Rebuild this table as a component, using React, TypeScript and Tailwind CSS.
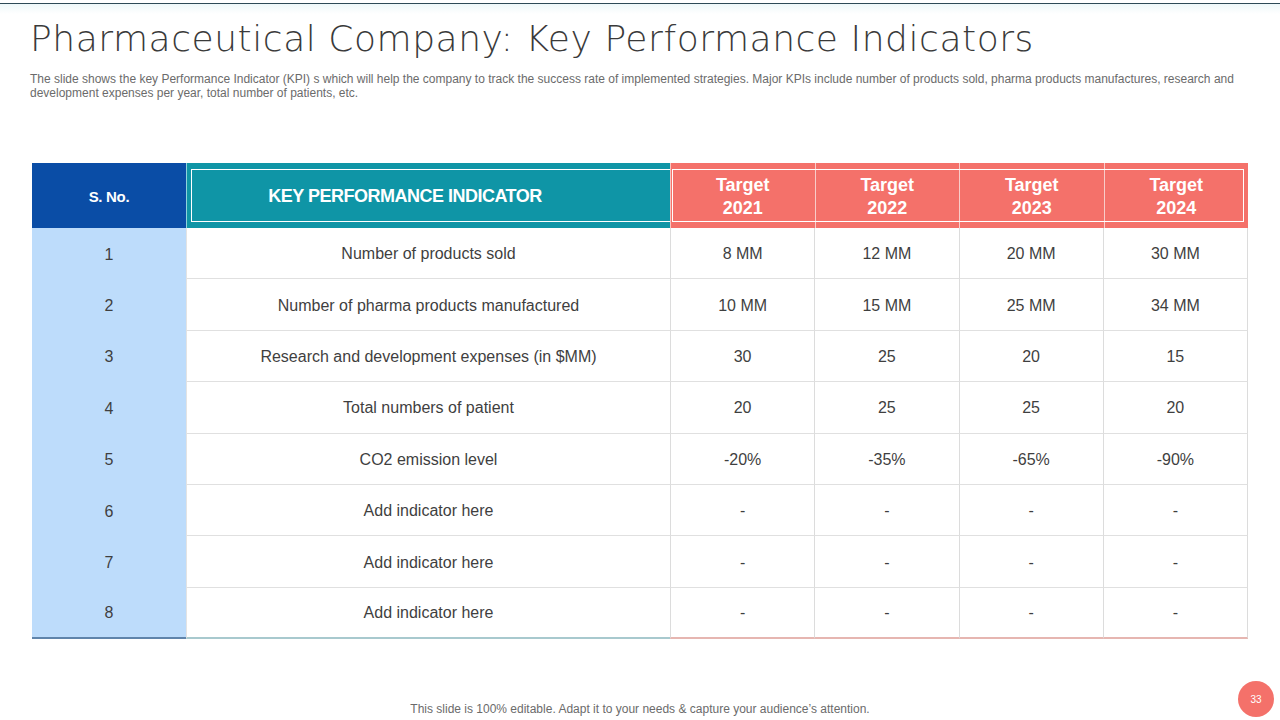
import React from "react";

const rows: [string, string, string, string, string, string][] = [
  ["1", "Number of products sold", "8 MM", "12 MM", "20 MM", "30 MM"],
  ["2", "Number of pharma products manufactured", "10 MM", "15 MM", "25 MM", "34 MM"],
  ["3", "Research and development expenses (in $MM)", "30", "25", "20", "15"],
  ["4", "Total numbers of patient", "20", "25", "25", "20"],
  ["5", "CO2 emission level", "-20%", "-35%", "-65%", "-90%"],
  ["6", "Add indicator here", "-", "-", "-", "-"],
  ["7", "Add indicator here", "-", "-", "-", "-"],
  ["8", "Add indicator here", "-", "-", "-", "-"],
];

const years = ["2021", "2022", "2023", "2024"];

export default function App() {
  return (
    <div
      className="relative w-[1280px] h-[720px] overflow-hidden bg-white flex flex-col"
      style={{ fontFamily: '"Liberation Sans", Arial, sans-serif' }}
    >
      <div className="h-[3px] bg-white" />
      <div className="h-px bg-[#2e4a56]" />
      <div className="h-[10px] bg-gradient-to-b from-[#eef8f9] to-white" />

      <h1
        className="ml-[30px] mt-[5px] text-[36px] leading-[40px] font-extralight text-[#3a3a3a] tracking-[0.55px]"
        style={{ fontFamily: '"DejaVu Sans", sans-serif' }}
      >
        Pharmaceutical Company: Key Performance Indicators
      </h1>

      <p className="ml-[30px] mt-[13px] text-[12px] leading-[14px] text-[#6b6b6b]">
        The slide shows the key Performance Indicator (KPI) s which will help the company to track the success rate of implemented strategies. Major KPIs include number of products sold, pharma products manufactures, research and
        <br />
        development expenses per year, total number of patients, etc.
      </p>

      <div className="ml-[32px] mt-[63px] w-[1216px]">
        {/* header */}
        <div className="flex h-[65px]">
          <div className="w-[154px] bg-[#0a4da6] flex items-center justify-center pt-[4px] text-white font-bold text-[15px] tracking-[-0.3px]">
            S. No.
          </div>
          <div className="w-[484px] bg-[#0f95a6] border-l border-[#8fd3dc] pt-[6px] pb-[6px] pl-[4px]">
            <div className="h-full border border-white border-r-0 flex items-center justify-center pr-[52px] pt-[2px] text-white font-bold text-[18px] tracking-[-0.5px]">
              KEY PERFORMANCE INDICATOR
            </div>
          </div>
          <div className="relative w-[578px] bg-[#f4716a] flex">
            {years.map((y, i) => (
              <div
                key={y}
                className={`flex-1 flex flex-col items-center justify-center pt-[2px] text-white font-bold text-[18px] leading-[23px] ${
                  i === 0 ? "border-l border-[#f8c4bf]" : "border-l border-[#f8cdc9]"
                }`}
              >
                <span>Target</span>
                <span>{y}</span>
              </div>
            ))}
            <div className="pointer-events-none absolute left-[2px] right-[4px] top-[6px] bottom-[6px] border border-white" />
          </div>
        </div>

        {/* body */}
        {rows.map((r, ri) => {
          const last = ri === rows.length - 1;
          return (
            <div key={ri} className="flex h-[51.4px] text-[16px] text-[#3f3f3f]">
              <div
                className={`w-[154px] bg-[#bddcfb] flex items-center justify-center pt-[2px] ${
                  last ? "border-b-2 border-[#5f84ab]" : ""
                }`}
              >
                {r[0]}
              </div>
              <div
                className={`w-[484px] flex items-center justify-center pt-[2px] border-l border-[#e3e3e3] ${
                  last ? "border-b-2 border-b-[#a8c9ce]" : "border-b border-b-[#e0e0e0]"
                }`}
              >
                {r[1]}
              </div>
              {[2, 3, 4, 5].map((c) => (
                <div
                  key={c}
                  className={`flex-1 flex items-center justify-center pt-[2px] border-l border-[#dcdcdc] ${
                    c === 5 ? "border-r" : ""
                  } ${last ? "border-b-2 border-b-[#e6b6b1]" : "border-b border-b-[#e0e0e0]"}`}
                >
                  {r[c]}
                </div>
              ))}
            </div>
          );
        })}
      </div>

      <div className="flex-1" />
      <p className="mb-[4px] text-center text-[12px] leading-[14px] text-[#6b6b6b]">
        This slide is 100% editable. Adapt it to your needs &amp; capture your audience’s attention.
      </p>

      <div className="absolute left-[1238px] top-[681px] w-[36px] h-[36px] rounded-full bg-[#f4716a] flex items-center justify-center text-white text-[10px]">
        33
      </div>
    </div>
  );
}
